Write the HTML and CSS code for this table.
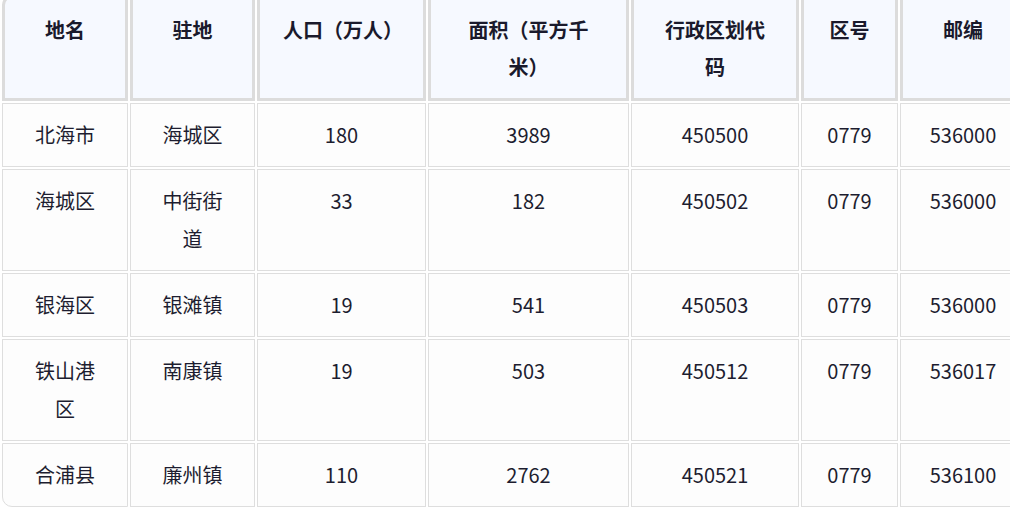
FILE: index.html
```html
<!DOCTYPE html>
<html lang="zh-CN">
<head>
<meta charset="utf-8">
<title>北海市行政区划</title>
<link rel="stylesheet" href="styles.css">
</head>
<body>
<div class="frame">
<table class="regions">
  <thead>
    <tr>
      <th class="c1">地名</th>
      <th class="c2">驻地</th>
      <th class="c3 nowrap">人口（万人）</th>
      <th class="c4">面积（平方千米）</th>
      <th class="c5">行政区划代码</th>
      <th class="c6">区号</th>
      <th class="c7">邮编</th>
    </tr>
  </thead>
  <tbody>
    <tr><td>北海市</td><td>海城区</td><td>180</td><td>3989</td><td>450500</td><td>0779</td><td>536000</td></tr>
    <tr><td>海城区</td><td>中街街道</td><td>33</td><td>182</td><td>450502</td><td>0779</td><td>536000</td></tr>
    <tr><td>银海区</td><td>银滩镇</td><td>19</td><td>541</td><td>450503</td><td>0779</td><td>536000</td></tr>
    <tr><td>铁山港区</td><td>南康镇</td><td>19</td><td>503</td><td>450512</td><td>0779</td><td>536017</td></tr>
    <tr><td>合浦县</td><td>廉州镇</td><td>110</td><td>2762</td><td>450521</td><td>0779</td><td>536100</td></tr>
  </tbody>
</table>
</div>
</body>
</html>
```

FILE: styles.css
```css
html, body {
  margin: 0;
  padding: 0;
  background: #ffffff;
  overflow: hidden;
}

.frame {
  width: 1010px;
  margin-top: -7px;
  overflow: hidden;
}

.regions {
  border-collapse: separate;
  border-spacing: 2px;
  table-layout: fixed;
  width: 1028px;
  font-family: "Noto Sans CJK SC", "Noto Sans", sans-serif;
  font-size: 20px;
  line-height: 38px;
  color: #1d1d30;
}

.regions th,
.regions td {
  box-sizing: border-box;
  text-align: center;
  vertical-align: top;
  padding: 12px 23px;
}

.regions th {
  background: #f6f9ff;
  border: 3px solid #dcdcdc;
  padding-top: 13px;
  padding-bottom: 13px;
  line-height: 37px;
  font-weight: 700;
  color: #1a1a2c;
}

.regions td {
  background: #fdfdfd;
  border: 1px solid #dedede;
  font-weight: 400;
}

.nowrap { white-space: nowrap; }

.c1 { width: 126px; border-top-left-radius: 10px; }
.c2 { width: 125px; }
.c3 { width: 169px; }
.c4 { width: 201px; }
.c5 { width: 168px; }
.c6 { width: 97px; }
.c7 { width: 126px; }

.regions tbody tr:last-child td:first-child {
  border-bottom-left-radius: 10px;
}
```
